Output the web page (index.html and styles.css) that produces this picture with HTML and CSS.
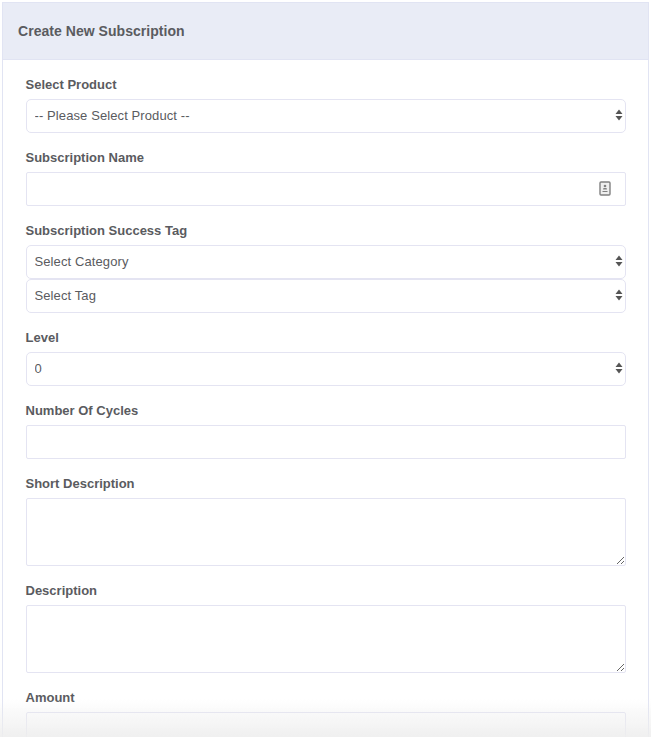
FILE: index.html
```html
<!DOCTYPE html>
<html lang="en">
<head>
  <meta charset="UTF-8">
  <meta name="viewport" content="width=device-width, initial-scale=1.0">
  <title>Create New Subscription</title>
  <link rel="stylesheet" href="styles.css">
</head>
<body>
  <div class="card">
    <div class="card-header">Create New Subscription</div>
    <form class="card-body">
      <div class="form-group">
        <label>Select Product</label>
        <div class="select-wrap">
          <select class="field"><option>-- Please Select Product --</option></select>
          <svg class="arrows" width="8" height="12" viewBox="0 0 8 12"><path d="M4 .5 7.5 5H.5zM4 11.5.5 7h7z"/></svg>
        </div>
      </div>
      <div class="form-group">
        <label>Subscription Name</label>
        <div class="select-wrap">
          <input class="field square" type="text">
          <svg class="contact-icon" width="12" height="15" viewBox="0 0 12 15"><rect x="1" y="1" width="10" height="13" rx="1" fill="#eee" stroke="#808080" stroke-width="1.4"/><circle cx="6" cy="5" r="1.3" fill="#808080"/><path d="M4.5 7h3l.5 1.5H4zM3.5 10h5v1h-5z" fill="#808080"/></svg>
        </div>
      </div>
      <div class="form-group">
        <label>Subscription Success Tag</label>
        <div class="select-wrap">
          <select class="field"><option>Select Category</option></select>
          <svg class="arrows" width="8" height="12" viewBox="0 0 8 12"><path d="M4 .5 7.5 5H.5zM4 11.5.5 7h7z"/></svg>
        </div>
        <div class="select-wrap">
          <select class="field"><option>Select Tag</option></select>
          <svg class="arrows" width="8" height="12" viewBox="0 0 8 12"><path d="M4 .5 7.5 5H.5zM4 11.5.5 7h7z"/></svg>
        </div>
      </div>
      <div class="form-group">
        <label>Level</label>
        <div class="select-wrap">
          <select class="field"><option>0</option></select>
          <svg class="arrows" width="8" height="12" viewBox="0 0 8 12"><path d="M4 .5 7.5 5H.5zM4 11.5.5 7h7z"/></svg>
        </div>
      </div>
      <div class="form-group">
        <label>Number Of Cycles</label>
        <input class="field square" type="text">
      </div>
      <div class="form-group">
        <label>Short Description</label>
        <textarea class="field square area"></textarea>
      </div>
      <div class="form-group">
        <label>Description</label>
        <textarea class="field square area"></textarea>
      </div>
      <div class="form-group">
        <label>Amount</label>
        <input class="field square" type="text">
      </div>
    </form>
  </div>
  <div class="fade"></div>
</body>
</html>
```

FILE: styles.css
```css
html, body {
  height: 100%;
  overflow: hidden;
}
body {
  margin: 0;
  padding: 2px 2px 0;
  box-sizing: border-box;
  background: #fff;
  font-family: "Liberation Sans", Arial, sans-serif;
  font-size: 13px;
  color: #5a5b60;
}
.card {
  border: 1px solid #e1e4f3;
  background: #fff;
}
.card-header {
  height: 56px;
  line-height: 57px;
  padding-left: 15px;
  background: #e9ecf6;
  border-bottom: 1px solid #e1e4f3;
  font-size: 14px;
  font-weight: bold;
  letter-spacing: 0.04px;
}
.card-body {
  padding: 16px 22px 0 22.5px;
}
.form-group {
  margin-bottom: 16px;
}
label {
  display: block;
  margin-bottom: 5px;
  height: 18px;
  line-height: 18px;
  font-weight: bold;
}
.select-wrap {
  position: relative;
}
.field {
  display: block;
  width: 100%;
  height: 34px;
  box-sizing: border-box;
  padding: 0 8px 2px;
  border: 1px solid #e4e4f2;
  border-radius: 5px;
  background: #fff;
  font-family: inherit;
  font-size: 13px;
  letter-spacing: 0.1px;
  color: #5a5b60;
  appearance: none;
  outline: none;
}
.square {
  border-radius: 2px;
}
.area {
  height: 68px;
  padding: 8px;
  resize: vertical;
}
.arrows {
  position: absolute;
  top: 10px;
  right: 3.5px;
  fill: #555;
}
.contact-icon {
  position: absolute;
  top: 9px;
  right: 15px;
}
.fade {
  position: fixed;
  left: 0;
  right: 0;
  bottom: 0;
  height: 38px;
  background: linear-gradient(to bottom, rgba(240,240,240,0), rgba(238,238,238,0.9));
  pointer-events: none;
}
```
